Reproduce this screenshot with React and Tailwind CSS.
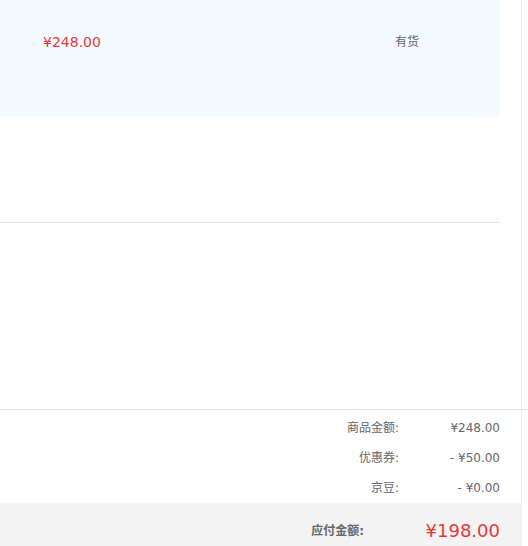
const font = { fontFamily: '"DejaVu Sans", "Noto Sans CJK SC", sans-serif' };

const SummaryRow = ({ label, value }) => (
    <div className="flex h-[30px] items-center text-[12px] text-[#666]">
        <div className="w-[399px] text-right">{label}</div>
        <div className="w-[101px] text-right">{value}</div>
    </div>
);

const App = () => {
    return (
        <div
            className="w-[528px] h-[546px] bg-white overflow-hidden"
            style={font}
        >
            <div className="w-[522px] h-full border-r border-[#eee] flex flex-col">
                <div className="w-[500px] h-[117px] bg-[#f3fbfe] flex items-start pt-[32px] shrink-0">
                    <div className="w-[395px] pl-[43px] text-[14px] text-[#e4393c]">
                        ¥248.00
                    </div>
                    <div className="text-[12px] text-[#666] pt-[1px]">有货</div>
                </div>
                <div className="h-[105px] shrink-0" />
                <div className="w-[500px] border-t border-[#e6e6e6] shrink-0" />
                <div className="h-[186px] shrink-0" />
                <div className="w-[528px] border-t border-[#e6e6e6] shrink-0" />
                <div className="pt-[3px] shrink-0">
                    <SummaryRow label="商品金额:" value="¥248.00" />
                    <SummaryRow label="优惠券:" value="- ¥50.00" />
                    <SummaryRow label="京豆:" value="- ¥0.00" />
                </div>
                <div className="flex-1 bg-[#f3f3f3] flex items-center pt-[12px]">
                    <div className="w-[364px] text-right text-[12px] font-bold text-[#666]">
                        应付金额:
                    </div>
                    <div className="w-[136px] text-right text-[18px] text-[#e4393c]">
                        ¥198.00
                    </div>
                </div>
            </div>
        </div>
    );
};

export default App;
